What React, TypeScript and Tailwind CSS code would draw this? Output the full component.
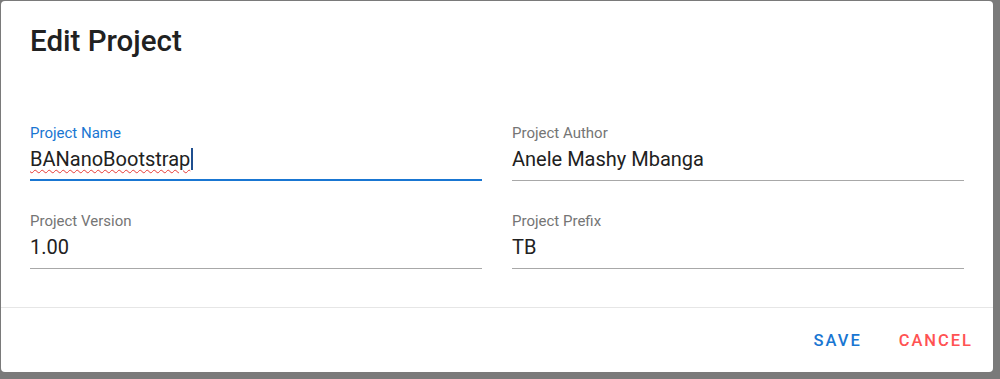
import React from "react";

function Field({
  label,
  value,
  focused,
  spell,
}: {
  label: string;
  value: string;
  focused?: boolean;
  spell?: boolean;
}) {
  return (
    <div className="flex flex-col">
      <div
        className={`text-[15px] leading-[16px] h-[16px] ${focused ? "text-[#1976d2]" : "text-[#757575]"}`}
      >
        {label}
      </div>
      <div className="mt-[5px] h-[26px] text-[20px] leading-[26px] text-[#212121] flex items-center">
        {spell ? (
          <span className="underline decoration-wavy decoration-[#e53935] decoration-[1px] underline-offset-[3px]">
            {value}
          </span>
        ) : (
          <span>{value}</span>
        )}
        {focused && <span className="inline-block w-[1.5px] h-[22px] bg-[#1f4f8f] ml-[1px]" />}
      </div>
      <div
        className={focused ? "mt-[7px] h-[2px] bg-[#1976d2]" : "mt-[8px] h-[1px] bg-[#a8a8a8]"}
      />
    </div>
  );
}

export default function App() {
  return (
    <div
      className="w-[1000px] h-[379px] bg-[#7a7a7a] pt-[1px] pl-[1px]"
      style={{ fontFamily: "Roboto, 'Liberation Sans', sans-serif" }}
    >
      <div className="w-[992px] h-[371px] bg-white rounded-[4px] flex flex-col">
        <div className="pt-[22px] pl-[29px] h-[124px]">
          <h1 className="text-[29.5px] leading-[36px] font-medium text-[#212121]">Edit Project</h1>
        </div>
        <div className="grid grid-cols-2 gap-x-[30px] gap-y-[32px] px-[29px]">
          <Field label="Project Name" value="BANanoBootstrap" focused spell />
          <Field label="Project Author" value="Anele Mashy Mbanga" />
          <Field label="Project Version" value="1.00" />
          <Field label="Project Prefix" value="TB" />
        </div>
        <div className="mt-auto h-[1px] bg-[#e6e6e6]" />
        <div className="h-[64px] flex items-center justify-end pr-[20px] gap-[37px] pt-[3px]">
          <button className="text-[16.5px] font-medium tracking-[0.12em] text-[#1976d2] uppercase">
            Save
          </button>
          <button className="text-[16.5px] font-medium tracking-[0.12em] text-[#ff5252] uppercase">
            Cancel
          </button>
        </div>
      </div>
    </div>
  );
}
